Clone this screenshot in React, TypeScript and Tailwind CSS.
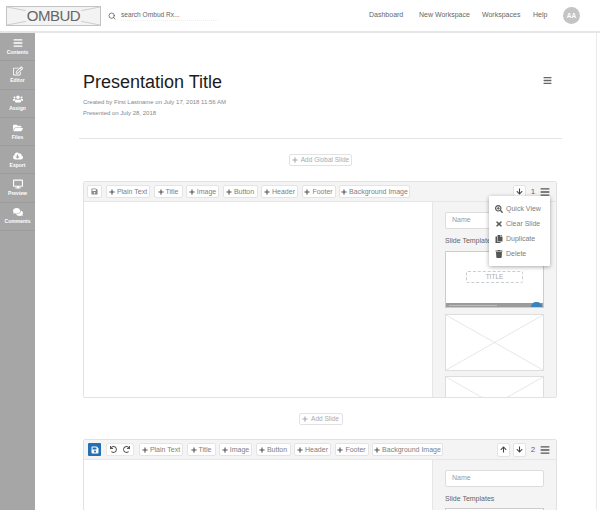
import * as React from "react";
import { Search } from "lucide-react";
import {
  FaArrowDown,
  FaArrowUp,
  FaBars,
  FaCloudDownloadAlt,
  FaComments,
  FaCopy,
  FaDesktop,
  FaFolderOpen,
  FaPlus,
  FaRedo,
  FaRegEdit,
  FaSave,
  FaSearchPlus,
  FaTimes,
  FaTrash,
  FaUndo,
  FaUsers,
} from "react-icons/fa";

const sideItems = [
  { label: "Contents", icon: FaBars },
  { label: "Editor", icon: FaRegEdit },
  { label: "Assign", icon: FaUsers },
  { label: "Files", icon: FaFolderOpen },
  { label: "Export", icon: FaCloudDownloadAlt },
  { label: "Preview", icon: FaDesktop },
  { label: "Comments", icon: FaComments },
];

const tools = [
  { label: "Plain Text", width: "w-[44px]" },
  { label: "Title", width: "w-[29px]" },
  { label: "Image", width: "w-[33px]" },
  { label: "Button", width: "w-[35px]" },
  { label: "Header", width: "w-[37px]" },
  { label: "Footer", width: "w-[34px]" },
  { label: "Background Image", width: "w-[71px]" },
];

function Wireframe({ className }: { className: string }) {
  return (
    <svg className={className} viewBox="0 0 100 56" preserveAspectRatio="none">
      <path d="M0 0L100 56M100 0L0 56" stroke="#dcdcdc" strokeWidth="0.7" vectorEffect="non-scaling-stroke" fill="none" />
    </svg>
  );
}

function ToolButton({ label, width }: { label: string; width: string }) {
  return (
    <button className={`${width} h-[13px] shrink-0 flex items-center justify-center gap-[2px] bg-white border border-[#e4e4e4] rounded-[2px] text-[7px] leading-none text-[#808080]`}>
      <FaPlus className="text-[6px] text-[#555]" />
      <span className="whitespace-nowrap">{label}</span>
    </button>
  );
}

function AddButton({ label, width }: { label: string; width: string }) {
  return (
    <div className="flex justify-center">
      <button className={`${width} h-[12px] flex items-center justify-center gap-[3px] bg-white border border-[#e2e2e2] rounded-[2px] text-[6.5px] leading-none text-[#aaa]`}>
        <FaPlus className="text-[6px] text-[#aaa]" />
        {label}
      </button>
    </div>
  );
}

function Arrow({ icon: Icon }: { icon: React.ComponentType<{ className?: string }> }) {
  return (
    <span className="w-[13px] h-[14px] flex items-center justify-center bg-white border border-[#e4e4e4] rounded-[2px]">
      <Icon className="text-[7px] text-[#444]" />
    </span>
  );
}

function Panel({ children }: { children: React.ReactNode }) {
  return (
    <div className="w-[124px] shrink-0 bg-[#f4f4f4] border-l border-[#e6e6e6] px-[12px] pt-[10px] overflow-hidden">
      <div className="h-[17px] bg-white border border-[#ddd] rounded-[2px] px-[6px] flex items-center text-[7px] text-[#999]">Name</div>
      <p className="mt-[7px] text-[7px] leading-[10px] text-[#666] whitespace-nowrap">Slide Templates</p>
      {children}
    </div>
  );
}

const menuItems = [
  { label: "Quick View", icon: FaSearchPlus },
  { label: "Clear Slide", icon: FaTimes },
  { label: "Duplicate", icon: FaCopy },
  { label: "Delete", icon: FaTrash },
];

export default function App() {
  return (
    <div className="w-[600px] h-[510px] overflow-hidden bg-white font-['Liberation_Sans',Arial,sans-serif]">
      <header className="h-[33px] flex items-center border-b-2 border-[#e6e6e6] pl-[6px] pr-[20px]">
        <div className="relative w-[95px] h-[20px] border border-[#c4c4c4] bg-[#f3f3f3] flex items-center justify-center">
          <svg className="absolute inset-0 w-full h-full" viewBox="0 0 95 20" preserveAspectRatio="none">
            <path d="M0 0L95 20M95 0L0 20" stroke="#bbb" strokeWidth="0.7" fill="none" />
          </svg>
          <span className="relative text-[15px] leading-none tracking-[-0.5px] text-[#666] bg-[#f3f3f3] px-[1px]">OMBUD</span>
        </div>
        <Search className="w-[8px] h-[8px] ml-[7px] text-[#666]" strokeWidth={2.5} />
        <div className="ml-[5px] w-[97px] border-b border-dotted border-[#f1eedd] text-[6.6px] leading-[10px] text-[#666]">search Ombud Rx...</div>
        <nav className="ml-auto flex items-center text-[7px] text-[#666] whitespace-nowrap">
          <span className="w-[50px]">Dashboard</span>
          <span className="w-[63px]">New Workspace</span>
          <span className="w-[51px]">Workspaces</span>
          <span className="w-[30px]">Help</span>
          <span className="w-[17px] h-[17px] rounded-full bg-[#c4c4c4] flex items-center justify-center text-[6.5px] font-bold text-white">AA</span>
        </nav>
      </header>

      <div className="flex h-[477px]">
        <aside className="w-[35px] shrink-0 bg-[#a6a6a6]">
          {sideItems.map(({ label, icon: Icon }) => (
            <div key={label} className="h-[28.3px] flex flex-col items-center justify-center gap-[1px] border-b border-[#9c9c9c] text-white">
              <Icon className="text-[10px]" />
              <span className="text-[5px] leading-[7px] font-bold">{label}</span>
            </div>
          ))}
        </aside>

        <main className="relative flex-1 overflow-hidden border-r border-[#eaeaea] mr-[3px] pl-[44px] pr-[34px] pt-[39px]">
          <div className="pl-[4px] pr-[5px] flex items-start justify-between">
            <div>
              <h1 className="text-[18px] leading-[21px] text-[#1c1c1c]">Presentation Title</h1>
              <p className="mt-[4px] text-[6px] leading-[11px] text-[#888]">Created by First Lastname on July 17, 2018 11:56 AM</p>
              <p className="text-[6px] leading-[11px] text-[#888]">Presented on July 28, 2018</p>
            </div>
            <FaBars className="mt-[4px] mr-[5px] text-[9px] text-[#666]" />
          </div>
          <hr className="mt-[19px] mb-[15px] border-[#e4e4e4]" />
          <AddButton label="Add Global Slide" width="w-[63px]" />

          <section className="relative mt-[15px] ml-[4px] mr-[5px] h-[217px] flex flex-col border border-[#e2e2e2] rounded-[2px]">
            <div className="h-[20px] shrink-0 flex items-center bg-[#f4f4f4] border-b border-[#e6e6e6] pl-[3px] pr-[6px]">
              <span className="w-[15px] h-[13px] mr-[4px] flex items-center justify-center bg-white border border-[#e4e4e4] rounded-[2px]">
                <FaSave className="text-[7px] text-[#888]" />
              </span>
              <div className="flex gap-[3.5px]">
                {tools.map((t) => <ToolButton key={t.label} {...t} />)}
              </div>
              <div className="ml-auto flex items-center">
                <Arrow icon={FaArrowDown} />
                <span className="w-[14px] text-center text-[8px] text-[#666]">1</span>
                <FaBars className="text-[10px] text-[#555]" />
              </div>
            </div>
            <div className="flex-1 flex justify-end min-h-0">
              <Panel>
                <div className="mt-[5px] relative h-[57px] bg-white border border-[#ccc] flex justify-center pt-[19px]">
                  <div className="w-[57px] h-[12px] border border-dashed border-[#ccc] rounded-[2px] flex items-center justify-center text-[6.5px] text-[#aaa]">TITLE</div>
                  <div className="absolute left-0 right-0 bottom-0 h-[4px] bg-[#9b9b9b]" />
                  <div className="absolute left-[3px] bottom-[1px] w-[48px] h-[1px] bg-[#bdbdbd]" />
                  <div className="absolute right-[1px] bottom-0 w-[11px] h-[5px] rounded-t-full bg-[#3b83bd]" />
                </div>
                <Wireframe className="block mt-[6px] w-full h-[57px] bg-white border border-[#ddd]" />
                <Wireframe className="block mt-[5px] w-full h-[57px] bg-white border border-[#ddd]" />
              </Panel>
            </div>

            <div className="absolute left-[405px] top-[14px] w-[61px] h-[70px] bg-white rounded-[1px] shadow-[0_1px_4px_rgba(0,0,0,0.35)] pt-[5px] pl-[6px]">
              {menuItems.map(({ label, icon: Icon }) => (
                <div key={label} className="h-[15px] flex items-center gap-[3px] text-[7px] leading-none text-[#808080] whitespace-nowrap">
                  <Icon className="w-[8px] text-[8px] text-[#555]" />
                  {label}
                </div>
              ))}
            </div>
          </section>

          <div className="mt-[15px]">
            <AddButton label="Add Slide" width="w-[44px]" />
          </div>

          <section className="mt-[14px] ml-[4px] mr-[5px] h-[100px] flex flex-col border border-[#e2e2e2] rounded-[2px]">
            <div className="h-[20px] shrink-0 flex items-center bg-[#f4f4f4] border-b border-[#e6e6e6] pl-[4px] pr-[6px]">
              <span className="w-[13px] h-[13px] flex items-center justify-center bg-[#2470b5] rounded-[1px]">
                <FaSave className="text-[8px] text-white" />
              </span>
              <span className="w-[28px] h-[13px] ml-[5px] mr-[5px] flex items-center justify-around bg-white border border-[#e8e8e8] rounded-[2px]">
                <FaUndo className="text-[7px] text-[#555]" />
                <FaRedo className="text-[7px] text-[#555]" />
              </span>
              <div className="flex gap-[3.5px]">
                {tools.map((t) => <ToolButton key={t.label} {...t} />)}
              </div>
              <div className="ml-auto flex items-center gap-[3px]">
                <Arrow icon={FaArrowUp} />
                <Arrow icon={FaArrowDown} />
              </div>
              <span className="w-[14px] text-center text-[8px] text-[#666]">2</span>
              <FaBars className="text-[10px] text-[#555]" />
            </div>
            <div className="flex-1 flex justify-end min-h-0">
              <Panel>
                <div className="mt-[4px] h-[40px] bg-white border border-[#ccc]" />
              </Panel>
            </div>
          </section>
        </main>
      </div>
    </div>
  );
}
